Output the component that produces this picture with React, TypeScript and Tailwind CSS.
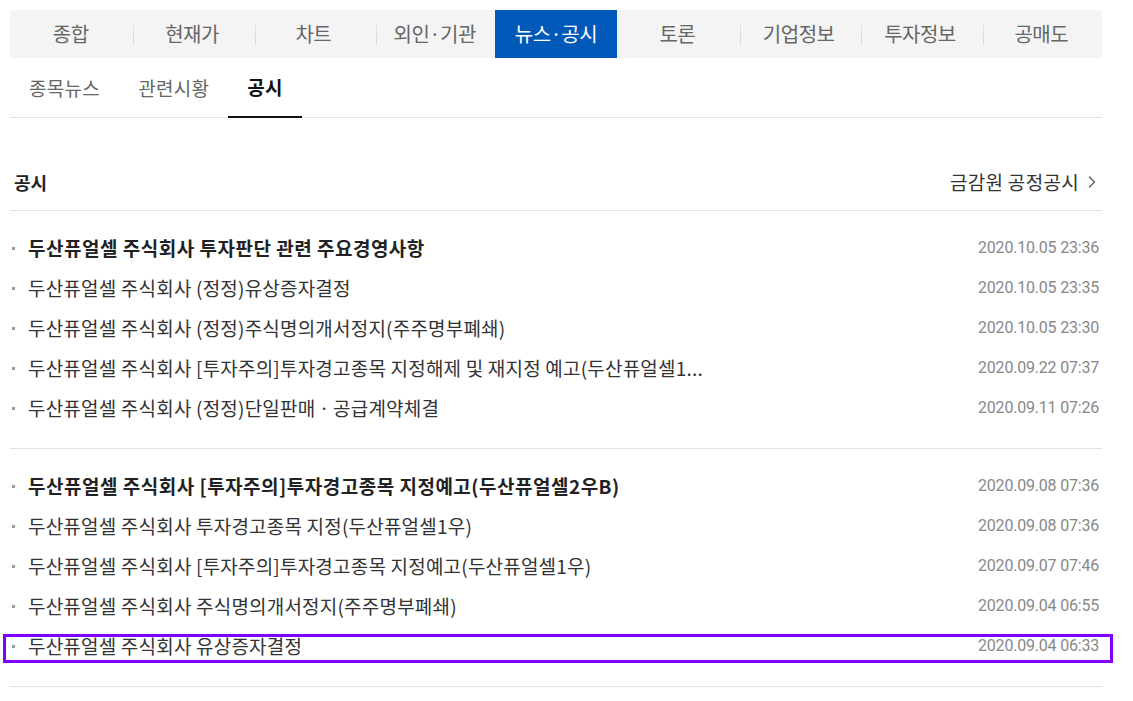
import { ChevronRight } from 'lucide-react';

const tabs = ['종합', '현재가', '차트', '외인·기관', '뉴스·공시', '토론', '기업정보', '투자정보', '공매도'];
const subTabs = ['종목뉴스', '관련시황', '공시'];

interface Notice {
  title: string;
  date: string;
  bold?: boolean;
}

const groups: Notice[][] = [
  [
    { title: '두산퓨얼셀 주식회사 투자판단 관련 주요경영사항', date: '2020.10.05 23:36', bold: true },
    { title: '두산퓨얼셀 주식회사 (정정)유상증자결정', date: '2020.10.05 23:35' },
    { title: '두산퓨얼셀 주식회사 (정정)주식명의개서정지(주주명부폐쇄)', date: '2020.10.05 23:30' },
    { title: '두산퓨얼셀 주식회사 [투자주의]투자경고종목 지정해제 및 재지정 예고(두산퓨얼셀1...', date: '2020.09.22 07:37' },
    { title: '두산퓨얼셀 주식회사 (정정)단일판매ㆍ공급계약체결', date: '2020.09.11 07:26' },
  ],
  [
    { title: '두산퓨얼셀 주식회사 [투자주의]투자경고종목 지정예고(두산퓨얼셀2우B)', date: '2020.09.08 07:36', bold: true },
    { title: '두산퓨얼셀 주식회사 투자경고종목 지정(두산퓨얼셀1우)', date: '2020.09.08 07:36' },
    { title: '두산퓨얼셀 주식회사 [투자주의]투자경고종목 지정예고(두산퓨얼셀1우)', date: '2020.09.07 07:46' },
    { title: '두산퓨얼셀 주식회사 주식명의개서정지(주주명부폐쇄)', date: '2020.09.04 06:55' },
    { title: '두산퓨얼셀 주식회사 유상증자결정', date: '2020.09.04 06:33' },
  ],
];

function NoticeRow({ item, highlighted }: { item: Notice; highlighted?: boolean }) {
  return (
    <li className="relative flex h-[40px] items-center">
      <span className="ml-[2px] mr-[13px] h-[3px] w-[3px] shrink-0 bg-[#9a9a9a]" />
      <span
        className={`flex-1 truncate text-[19px] ${
          item.bold ? 'font-bold tracking-[0.5px] text-[#222]' : 'tracking-[0.2px] text-[#333]'
        }`}
      >
        {item.title}
      </span>
      <span className="ml-4 shrink-0 pr-[3px] font-['Roboto',sans-serif] text-[16px] tracking-[-0.2px] text-[#888]">
        {item.date}
      </span>
      {highlighted && (
        <span className="pointer-events-none absolute -left-[7px] -right-[11px] top-[8px] h-[29px] border-[3px] border-[#7f00ff]" />
      )}
    </li>
  );
}

export default function App() {
  return (
    <div className="min-h-screen bg-white font-['Noto_Sans_CJK_KR','Noto_Sans',sans-serif] text-[#333]">
      <div className="ml-[10px] w-[1092px] pt-[10px]">
        {/* main tabs */}
        <div className="flex h-[48px] bg-[#f4f4f4]">
          {tabs.map((t, i) => {
            const active = t === '뉴스·공시';
            const prevActive = i > 0 && tabs[i - 1] === '뉴스·공시';
            return (
              <div key={t} className="relative flex flex-1 items-center justify-center">
                {i > 0 && !active && !prevActive && (
                  <span className="absolute left-[2px] top-[15px] h-[20px] w-px bg-[#dedede]" />
                )}
                <div
                  className={`flex h-full w-full items-center justify-center text-[20px] tracking-[-0.5px] ${
                    active ? 'bg-[#0058b9] text-white' : 'text-[#666]'
                  }`}
                >
                  {t}
                </div>
              </div>
            );
          })}
        </div>

        {/* sub tabs */}
        <div className="flex border-b border-[#e3e3e3]">
          {subTabs.map((t) => {
            const active = t === '공시';
            return (
              <div
                key={t}
                className={`mb-[-1px] flex h-[60px] items-center px-[19px] text-[19px] tracking-[0.3px] ${
                  active ? 'border-b-2 border-[#111] font-bold text-[#111]' : 'text-[#666]'
                }`}
              >
                {t}
              </div>
            );
          })}
        </div>

        {/* section header */}
        <div className="flex items-center justify-between border-b border-[#e3e3e3] pb-[14px] pt-[50px] leading-[28px]">
          <h2 className="pl-[4px] text-[18px] font-bold text-[#222]">공시</h2>
          <a className="flex items-center text-[19px] tracking-[0.3px] text-[#333]">
            금감원 공정공시
            <ChevronRight className="ml-[3px] h-[20px] w-[20px] text-[#666]" strokeWidth={1.8} />
          </a>
        </div>

        {groups.map((g, gi) => (
          <ul key={gi} className="border-b border-[#e3e3e3] pb-[20px] pt-[17px]">
            {g.map((item, i) => (
              <NoticeRow key={i} item={item} highlighted={gi === 1 && i === g.length - 1} />
            ))}
          </ul>
        ))}
      </div>
    </div>
  );
}
